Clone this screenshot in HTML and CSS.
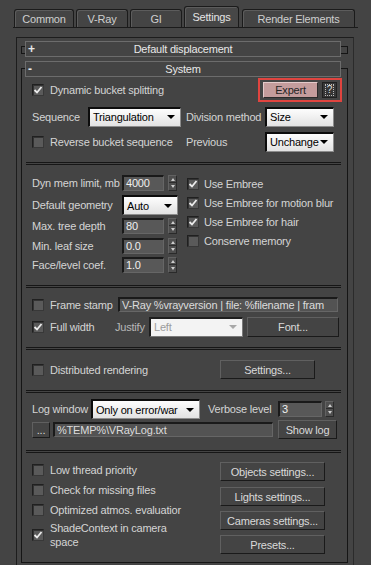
FILE: index.html
```html
<!DOCTYPE html>
<html lang="en">
<head>
    <meta charset="UTF-8">
    <title>V-Ray Settings</title>
    <link rel="stylesheet" href="styles.css">
</head>
<body>
    <div class="tabs">
        <div class="tab t-common">Common</div>
        <div class="tab t-vray">V-Ray</div>
        <div class="tab t-gi">GI</div>
        <div class="tab t-settings active">Settings</div>
        <div class="tab t-render">Render Elements</div>
    </div>

    <div class="panel">
        <div class="rollout collapsed">
            <div class="rollout-head"><span class="sign">+</span><span>Default displacement</span></div>
        </div>

        <div class="rollout">
            <div class="rollout-head"><span class="sign">-</span><span>System</span></div>

            <!-- buckets -->
            <div class="sec sec-buckets">
                <div class="row top-row">
                    <label class="check"><span class="cb on"><svg width="10" height="10" viewBox="0 0 10 10"><path d="M1.5 5 L4 7.5 L8.5 2" fill="none" stroke="#ececec" stroke-width="1.8"/></svg></span>Dynamic bucket splitting</label>
                    <div class="hilite">
                        <div class="btn expert">Expert</div>
                        <div class="btn help"><span class="help-box">?</span></div>
                    </div>
                </div>
                <div class="row drop-row">
                    <div class="half">
                        <span class="lbl seq-lbl">Sequence</span>
                        <div class="drop seq-drop"><span>Triangulation</span><i class="caret"></i></div>
                    </div>
                    <span class="lbl div-lbl">Division method</span>
                    <div class="drop div-drop"><span>Size</span><i class="caret"></i></div>
                </div>
                <div class="row drop-row">
                    <div class="half">
                        <label class="check"><span class="cb"></span>Reverse bucket sequence</label>
                    </div>
                    <span class="lbl div-lbl">Previous</span>
                    <div class="drop div-drop"><span>Unchange</span><i class="caret"></i></div>
                </div>
            </div>
            <div class="sep"></div>

            <!-- memory / embree -->
            <div class="sec sec-mem">
                <div class="mem-col">
                    <div class="mrow"><span class="lbl">Dyn mem limit, mb</span><div class="field mem-field">4000</div><span class="spin"></span></div>
                    <div class="mrow tall"><span class="lbl">Default geometry</span><div class="drop geo-drop"><span>Auto</span><i class="caret"></i></div></div>
                    <div class="mrow"><span class="lbl">Max. tree depth</span><div class="field mem-field">80</div><span class="spin"></span></div>
                    <div class="mrow"><span class="lbl">Min. leaf size</span><div class="field mem-field">0.0</div><span class="spin"></span></div>
                    <div class="mrow"><span class="lbl">Face/level coef.</span><div class="field mem-field">1.0</div><span class="spin"></span></div>
                </div>
                <div class="embree-col">
                    <label class="check erow"><span class="cb on"><svg width="10" height="10" viewBox="0 0 10 10"><path d="M1.5 5 L4 7.5 L8.5 2" fill="none" stroke="#ececec" stroke-width="1.8"/></svg></span>Use Embree</label>
                    <label class="check erow"><span class="cb on"><svg width="10" height="10" viewBox="0 0 10 10"><path d="M1.5 5 L4 7.5 L8.5 2" fill="none" stroke="#ececec" stroke-width="1.8"/></svg></span>Use Embree for motion blur</label>
                    <label class="check erow"><span class="cb on"><svg width="10" height="10" viewBox="0 0 10 10"><path d="M1.5 5 L4 7.5 L8.5 2" fill="none" stroke="#ececec" stroke-width="1.8"/></svg></span>Use Embree for hair</label>
                    <label class="check erow"><span class="cb"></span>Conserve memory</label>
                </div>
            </div>
            <div class="sep"></div>

            <!-- frame stamp -->
            <div class="sec sec-stamp">
                <div class="row stamp-row">
                    <label class="check stamp-check"><span class="cb"></span>Frame stamp</label>
                    <div class="field stamp-field">V-Ray %vrayversion | file: %filename | fram</div>
                </div>
                <div class="row width-row">
                    <label class="check width-check"><span class="cb on"><svg width="10" height="10" viewBox="0 0 10 10"><path d="M1.5 5 L4 7.5 L8.5 2" fill="none" stroke="#ececec" stroke-width="1.8"/></svg></span>Full width</label>
                    <span class="lbl dim justify-lbl">Justify</span>
                    <div class="drop off justify-drop"><span>Left</span><i class="caret"></i></div>
                    <div class="btn font-btn">Font...</div>
                </div>
            </div>
            <div class="sep"></div>

            <!-- distributed -->
            <div class="sec sec-dr">
                <label class="check dr-check"><span class="cb"></span>Distributed rendering</label>
                <div class="btn dr-btn">Settings...</div>
            </div>
            <div class="sep"></div>

            <!-- log -->
            <div class="sec sec-log">
                <div class="row log-row">
                    <span class="lbl log-lbl">Log window</span>
                    <div class="drop log-drop"><span>Only on error/war</span><i class="caret"></i></div>
                    <span class="lbl verbose-lbl">Verbose level</span>
                    <div class="field verbose-field">3</div>
                    <span class="spin verbose-spin"></span>
                </div>
                <div class="row path-row">
                    <div class="btn dots-btn">...</div>
                    <div class="field path-field">%TEMP%\VRayLog.txt</div>
                    <div class="btn showlog-btn">Show log</div>
                </div>
            </div>
            <div class="sep"></div>

            <!-- misc -->
            <div class="sec sec-misc">
                <div class="opt-col">
                    <label class="check orow"><span class="cb"></span><span class="txt">Low thread priority</span></label>
                    <label class="check orow"><span class="cb"></span><span class="txt">Check for missing files</span></label>
                    <label class="check orow"><span class="cb"></span><span class="txt">Optimized atmos. evaluatior</span></label>
                    <label class="check orow wrap"><span class="cb on"><svg width="10" height="10" viewBox="0 0 10 10"><path d="M1.5 5 L4 7.5 L8.5 2" fill="none" stroke="#ececec" stroke-width="1.8"/></svg></span><span class="txt">ShadeContext in camera space</span></label>
                </div>
                <div class="btn-col">
                    <div class="btn side-btn first">Objects settings...</div>
                    <div class="btn side-btn">Lights settings...</div>
                    <div class="btn side-btn">Cameras settings...</div>
                    <div class="btn side-btn">Presets...</div>
                </div>
            </div>
        </div>
    </div>
</body>
</html>
```

FILE: styles.css
```css
body {
    margin: 0;
    background-color: #444444;
    font-family: "Liberation Sans", Arial, sans-serif;
    font-size: 11px;
    letter-spacing: -0.2px;
    color: #d4d4d4;
    overflow: hidden;
}

/* tabs */
.tabs {
    display: flex;
    align-items: flex-end;
    gap: 2px;
    height: 27px;
    margin: 0 13px;
    padding-left: 1px;
    border-bottom: 1px solid #1b1b1b;
}
.tab {
    box-sizing: border-box;
    height: 18px;
    display: flex;
    align-items: center;
    justify-content: center;
    border: 1px solid #1b1b1b;
    border-bottom: none;
    border-radius: 3px 3px 0 0;
    box-shadow: inset 1px 1px 0 #5c5c5c;
    color: #cfcfcf;
}
.tab.active {
    height: 21px;
    background-color: #474747;
    color: #e4e4e4;
}
.t-common { width: 60px; }
.t-vray { width: 52px; }
.t-gi { width: 52px; }
.t-settings { width: 55px; }
.t-render { width: 113px; margin-left: 1px; }

/* panel + rollouts */
.panel {
    box-sizing: border-box;
    height: 528px;
    margin: 9px 17px 0 16px;
    border: 1px solid #1d1d1d;
    border-right-color: #2b2b2b;
    border-bottom: none;
    overflow: hidden;
}
.rollout {
    border: 1px solid #151515;
    margin: 14px 5px 0 4px;
}
.rollout.collapsed {
    margin-top: 8px;
}
.rollout-head {
    box-sizing: border-box;
    display: grid;
    grid-template-columns: 14px 1fr 14px;
    height: 16px;
    line-height: 14px;
    margin: -8px 6px 0 3px;
    border: 1px solid #6c6c6c;
    background-color: #444444;
    color: #e8e8e8;
    text-align: center;
}
.collapsed .rollout-head {
    margin: -6px 6px -4px 3px;
}
.sign {
    font-weight: bold;
    font-size: 12px;
    text-align: left;
    padding-left: 2px;
}

.sec {
    margin: 0 6px 0 4px;
    padding-left: 6px;
}
.sep {
    height: 1px;
    margin: 0 6px 0 4px;
    border-top: 1px solid #161616;
    border-bottom: 1px solid #161616;
}
.row {
    display: flex;
    align-items: center;
}
.lbl {
    flex: none;
    white-space: nowrap;
}
.lbl.dim {
    color: #b8b8b8;
}

/* controls */
.check {
    display: flex;
    align-items: center;
    gap: 6px;
    white-space: nowrap;
    flex: none;
}
.cb {
    box-sizing: border-box;
    width: 12px;
    height: 12px;
    flex: none;
    display: flex;
    align-items: center;
    justify-content: center;
    border: 1px solid #202020;
    border-right-color: #383838;
    border-bottom-color: #383838;
    background-color: #5a5a5a;
    box-shadow: inset 1px 1px 0 #333333;
}
.drop {
    box-sizing: border-box;
    height: 20px;
    flex: none;
    display: flex;
    align-items: center;
    justify-content: space-between;
    padding: 0 5px 0 3px;
    background: linear-gradient(#fdfdfd, #e2e2e2);
    border: 2px solid #0c0c0c;
    border-right: 1px solid #8c8c8c;
    border-bottom: 1px solid #8c8c8c;
    color: #000000;
    overflow: hidden;
    white-space: nowrap;
}
.caret {
    flex: none;
    width: 0;
    height: 0;
    border-left: 4px solid transparent;
    border-right: 4px solid transparent;
    border-top: 4px solid #000000;
}
.drop.off {
    background: #f3f3f3;
    color: #9c9c9c;
    border-color: #1e1e1e #7a7a7a #7a7a7a #1e1e1e;
}
.drop.off .caret {
    border-top-color: #a8a8a8;
}
.field {
    box-sizing: border-box;
    height: 16px;
    flex: none;
    padding-left: 2px;
    line-height: 13px;
    background-color: #585858;
    border: 2px solid #1a1a1a;
    border-right: 1px solid #666666;
    border-bottom: 1px solid #666666;
    color: #f0f0f0;
    white-space: nowrap;
    overflow: hidden;
}
.spin {
    box-sizing: border-box;
    width: 9px;
    height: 16px;
    flex: none;
    margin-left: 4px;
    display: flex;
    flex-direction: column;
    justify-content: space-around;
    align-items: center;
    border: 1px solid #2a2a2a;
    border-top-color: #626262;
    border-left-color: #626262;
    background: linear-gradient(#4e4e4e 6px, #2c2c2c 6px, #2c2c2c 7px, #4e4e4e 7px);
}
.spin::before {
    content: "";
    border-left: 2.5px solid transparent;
    border-right: 2.5px solid transparent;
    border-bottom: 3px solid #cccccc;
}
.spin::after {
    content: "";
    border-left: 2.5px solid transparent;
    border-right: 2.5px solid transparent;
    border-top: 3px solid #cccccc;
}
.btn {
    box-sizing: border-box;
    height: 19px;
    flex: none;
    display: flex;
    align-items: center;
    justify-content: center;
    border: 1px solid #1a1a1a;
    border-top-color: #606060;
    border-left-color: #606060;
    background-color: #444444;
    color: #dadada;
    white-space: nowrap;
}

/* buckets */
.sec-buckets {
    padding-top: 1px;
    padding-bottom: 10px;
}
.top-row {
    height: 24px;
    justify-content: space-between;
    margin-right: -1px;
}
.hilite {
    display: flex;
    gap: 4px;
    padding: 2px 3px;
    border: 2px solid #e0443f;
}
.btn.expert {
    width: 55px;
    height: 16px;
    background-color: #c49c9c;
    color: #242424;
    border-color: #e4caca #2a2a2a #2a2a2a #e4caca;
}
.btn.help {
    width: 15px;
    height: 16px;
    background-color: #363636;
    border-color: #202020;
}
.help-box {
    box-sizing: border-box;
    width: 9px;
    height: 12px;
    border: 1px dotted #bdbdbd;
    color: #e0e0e0;
    font-size: 10px;
    line-height: 10px;
    text-align: center;
}
.drop-row {
    height: 21px;
    margin-top: 4px;
}
.half {
    width: 154px;
    display: flex;
    align-items: center;
}
.seq-lbl { width: 56px; }
.seq-drop { width: 93px; }
.div-lbl { width: 79px; }
.div-drop { width: 69px; }

/* memory */
.sec-mem {
    display: flex;
    padding-top: 10px;
    padding-bottom: 12px;
}
.mem-col {
    width: 155px;
    flex: none;
}
.mrow {
    display: flex;
    align-items: center;
    height: 16px;
    margin-top: 4px;
}
.mrow:first-child { margin-top: 0; }
.mrow.tall { height: 20px; }
.mrow.tall + .mrow,
.mrow:last-child { margin-top: 3px; }
.mrow .lbl { width: 90px; }
.mem-field { width: 42px; }
.geo-drop { width: 56px; }
.embree-col {
    margin-top: -1px;
}
.erow {
    height: 19px;
    gap: 5px;
}

/* frame stamp */
.sec-stamp {
    padding-top: 9px;
    padding-bottom: 10px;
}
.stamp-row { height: 15px; }
.stamp-check { width: 86px; }
.stamp-field {
    width: 220px;
    height: 15px;
    color: #dcdcdc;
    background-color: #535353;
}
.width-row {
    height: 21px;
    margin-top: 4px;
}
.width-check { width: 83px; }
.justify-lbl { width: 34px; }
.justify-drop { width: 94px; }
.font-btn {
    width: 92px;
    height: 20px;
    margin-left: 4px;
}

/* distributed */
.sec-dr {
    display: flex;
    align-items: center;
    height: 19px;
    padding-top: 10px;
    padding-bottom: 11px;
}
.dr-check { width: 188px; }
.dr-btn { width: 95px; }

/* log */
.sec-log {
    padding-top: 6px;
    padding-bottom: 11px;
}
.log-row { height: 20px; }
.log-lbl { width: 59px; }
.log-drop { width: 109px; }
.verbose-lbl {
    width: 70px;
    margin-left: 8px;
}
.verbose-field { width: 44px; }
.verbose-spin { margin-left: 3px; }
.path-row {
    height: 19px;
    margin-top: 1px;
}
.dots-btn {
    width: 18px;
    height: 16px;
}
.path-field {
    width: 220px;
    height: 15px;
    margin-left: 3px;
    color: #dcdcdc;
    background-color: #535353;
}
.showlog-btn {
    width: 59px;
    margin-left: 5px;
}

/* misc */
.sec-misc {
    display: flex;
    padding-top: 7px;
    padding-bottom: 8px;
}
.opt-col {
    width: 188px;
    flex: none;
}
.orow { height: 20px; }
.orow .txt {
    max-width: 134px;
}
.orow.wrap {
    height: 28px;
    margin-top: 1px;
    white-space: normal;
    line-height: 14px;
}
.btn-col {
    display: flex;
    flex-direction: column;
    gap: 5px;
    padding-top: 2px;
}
.side-btn { width: 105px; }
.side-btn.first { margin-bottom: 1px; }
```
